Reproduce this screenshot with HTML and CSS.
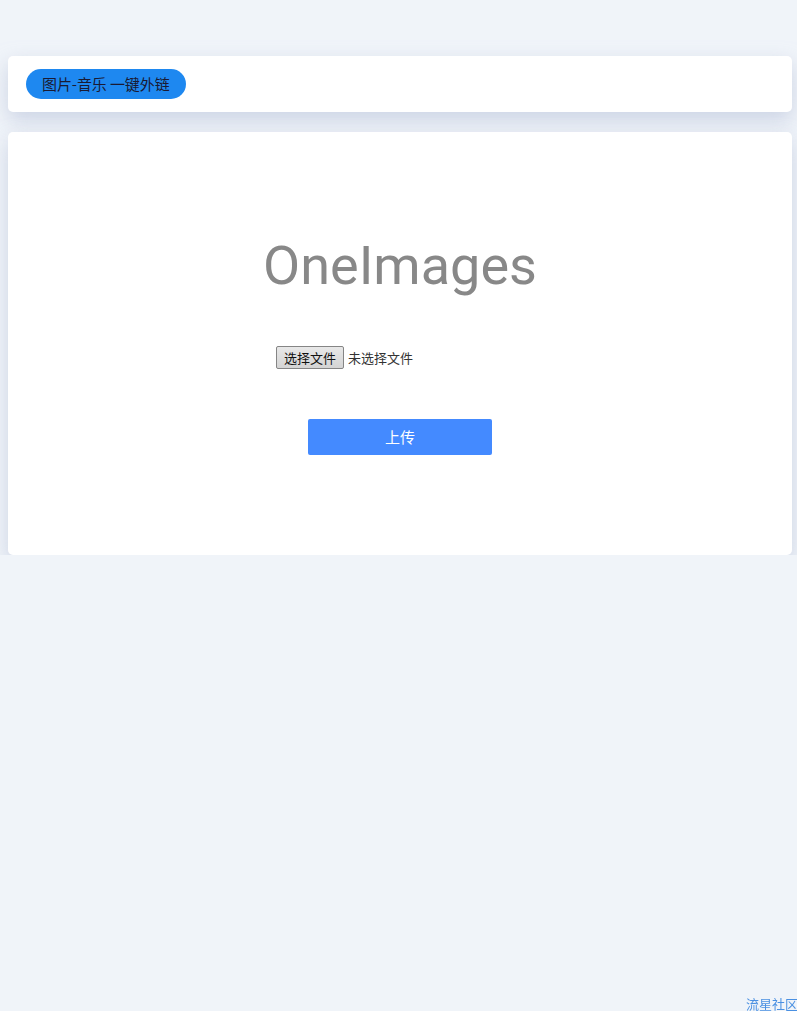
FILE: index.html
```html
<!DOCTYPE html>
<html lang="zh-CN">
<head>
    <meta charset="UTF-8">
    <meta name="viewport" content="width=device-width, initial-scale=1.0">
    <title>OneImages</title>
    <link rel="stylesheet" href="styles.css">
</head>
<body>
    <div class="header">
        <span class="tag">图片-音乐 一键外链</span>
    </div>
    <div class="main">
        <h1 class="title">OneImages</h1>
        <form class="upload">
            <label class="pick">
                <input type="file" name="file">
                <span class="pick-btn">选择文件</span>
                <span class="pick-name">未选择文件</span>
            </label>
            <div class="btn">上传</div>
        </form>
    </div>
    <a class="footer" href="#">流星社区</a>
</body>
</html>
```
FILE: styles.css
```css
body {
    margin: 0;
    background: #f0f4f9;
    font-family: "Noto Sans CJK SC", "Liberation Sans", sans-serif;
    padding: 56px 5px 0 8px;
}

.header, .main {
    background: #fff;
    border-radius: 5px;
    box-shadow: 0 8px 20px rgba(180, 190, 215, 0.6);
}

.header {
    height: 56px;
    display: flex;
    align-items: center;
    padding-left: 18px;
}

.tag {
    background: #1e88f0;
    color: #1a1a33;
    font-size: 15px;
    letter-spacing: -0.1px;
    height: 30px;
    line-height: 30px;
    padding: 0 16px;
    border-radius: 15px;
}

.main {
    margin-top: 20px;
    height: 423px;
    box-sizing: border-box;
    padding-top: 98px;
    text-align: center;
}

.title {
    margin: 0;
    font-family: Roboto, sans-serif;
    font-weight: 400;
    font-size: 54px;
    line-height: 72px;
    color: #888;
}

.upload {
    margin-top: 44px;
}

.pick {
    display: flex;
    align-items: center;
    width: 248px;
    margin: 0 auto;
    font-size: 13px;
    cursor: pointer;
}

.pick input {
    display: none;
}

.pick-btn {
    box-sizing: border-box;
    width: 68px;
    height: 23px;
    line-height: 21px;
    text-align: center;
    color: #111;
    background: linear-gradient(#e8e8e8, #d4d4d4);
    border: 1px solid #858585;
    border-radius: 2px;
}

.pick-name {
    margin-left: 4px;
    color: #333;
}

.btn {
    margin: 50px auto 0;
    width: 184px;
    height: 36px;
    line-height: 36px;
    background: #448aff;
    color: #fff;
    font-size: 15px;
    border-radius: 2px;
    cursor: pointer;
}

.footer {
    position: fixed;
    right: -1px;
    bottom: -2px;
    color: #4a90e2;
    font-size: 13px;
    text-decoration: none;
}
```
